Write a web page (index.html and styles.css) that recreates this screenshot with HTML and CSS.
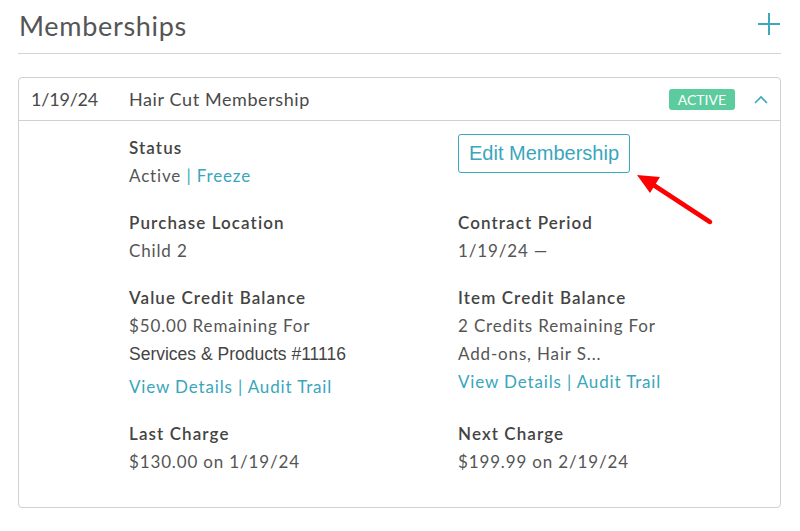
FILE: index.html
```html
<!DOCTYPE html>
<html>
<head>
<meta charset="utf-8">
<link rel="stylesheet" href="styles.css">
</head>
<body>
<div class="page">
  <div class="section-head">
    <h1 class="title">Memberships</h1>
    <svg class="plus" width="22" height="22" viewBox="0 0 22 22"><path d="M11 0V22M0 11H22" stroke="#3aa8bd" stroke-width="2" fill="none"/></svg>
  </div>
  <div class="card">
    <div class="card-head">
      <span class="date">1/19/24</span>
      <span class="name">Hair Cut Membership</span>
      <span class="badge">ACTIVE</span>
      <svg class="chev" width="14" height="9" viewBox="0 0 14 9"><path d="M1 8L7 2L13 8" stroke="#3aa8bd" stroke-width="1.6" fill="none"/></svg>
    </div>
    <div class="card-body">
      <div class="field">
        <div class="label">Status</div>
        <div class="value">Active <span class="sep">|</span> <a class="link">Freeze</a></div>
      </div>
      <div class="field">
        <button class="edit-btn">Edit Membership</button>
      </div>
      <div class="field">
        <div class="label">Purchase Location</div>
        <div class="value">Child 2</div>
      </div>
      <div class="field">
        <div class="label">Contract Period</div>
        <div class="value">1/19/24 —</div>
      </div>
      <div class="field">
        <div class="label">Value Credit Balance</div>
        <div class="value">$50.00 Remaining For</div>
        <div class="value alt">Services &amp; Products #11116</div>
        <div class="value links spaced"><a class="link">View Details</a> <span class="sep">|</span> <a class="link">Audit Trail</a></div>
      </div>
      <div class="field">
        <div class="label">Item Credit Balance</div>
        <div class="value">2 Credits Remaining For</div>
        <div class="value">Add-ons, Hair S...</div>
        <div class="value links"><a class="link">View Details</a> <span class="sep">|</span> <a class="link">Audit Trail</a></div>
      </div>
      <div class="field">
        <div class="label">Last Charge</div>
        <div class="value">$130.00 on 1/19/24</div>
      </div>
      <div class="field">
        <div class="label">Next Charge</div>
        <div class="value">$199.99 on 2/19/24</div>
      </div>
    </div>
  </div>
</div>
<svg class="arrow" width="800" height="531" viewBox="0 0 800 531">
  <line x1="710" y1="222" x2="652" y2="184" stroke="#ff0000" stroke-width="4.5" stroke-linecap="round"/>
  <polygon points="637,175 660,177 650,193" fill="#ff0000"/>
</svg>
</body>
</html>
```
FILE: styles.css
```css
html, body {
  margin: 0;
  padding: 0;
  background: #ffffff;
}
body {
  font-family: Lato, "Open Sans", sans-serif;
  color: #4a4a4a;
  position: relative;
  width: 800px;
  height: 531px;
  overflow: hidden;
}
.page {
  padding: 0 19px 0 18px;
}
.section-head {
  display: flex;
  align-items: center;
  justify-content: space-between;
  height: 53px;
  border-bottom: 1px solid #d3d3d3;
  padding: 0 1px 0 1px;
}
.title {
  margin: 0;
  font-weight: 400;
  font-size: 27px;
  letter-spacing: 0.7px;
  color: #555555;
  padding-bottom: 3px;
}
.plus {
  display: block;
  margin-top: -6px;
}
.card {
  margin-top: 23px;
  border: 1px solid #d0d0d0;
  border-radius: 4px;
}
.card-head {
  display: flex;
  align-items: center;
  height: 42px;
  border-bottom: 1px solid #d0d0d0;
  padding: 0 12px;
  font-size: 18px;
  letter-spacing: 0.6px;
  color: #4a4a4a;
}
.date {
  width: 98px;
  letter-spacing: -0.2px;
}
.name {
  flex: 1;
}
.badge {
  background: #5ccb9d;
  color: #ffffff;
  font-size: 14px;
  letter-spacing: 0;
  line-height: 21px;
  padding: 0 9px;
  border-radius: 3px;
  margin-right: 19px;
}
.chev {
  display: block;
  margin-right: 0;
}
.card-body {
  display: grid;
  grid-template-columns: 329px 1fr;
  row-gap: 19px;
  padding: 13px 0 31px 110px;
}
.label {
  font-weight: 600;
  font-size: 17px;
  letter-spacing: 1.1px;
  line-height: 28px;
  color: #444444;
}
.value {
  font-size: 17px;
  letter-spacing: 0.85px;
  line-height: 28px;
  color: #555555;
}
.value.alt {
  font-family: "Liberation Sans", Arial, sans-serif;
  font-size: 17.5px;
  letter-spacing: 0;
  color: #444444;
}
.value.spaced {
  margin-top: 5px;
}
.link {
  color: #39a6bc;
}
.sep {
  color: #39a6bc;
}
.edit-btn {
  height: 39px;
  width: 172px;
  background: #ffffff;
  border: 1px solid #3aa8bd;
  border-radius: 3px;
  color: #39a6bc;
  font-family: "Liberation Sans", Arial, sans-serif;
  font-size: 20px;
  padding: 0;
  cursor: pointer;
}
.arrow {
  position: absolute;
  left: 0;
  top: 0;
  pointer-events: none;
}
```
